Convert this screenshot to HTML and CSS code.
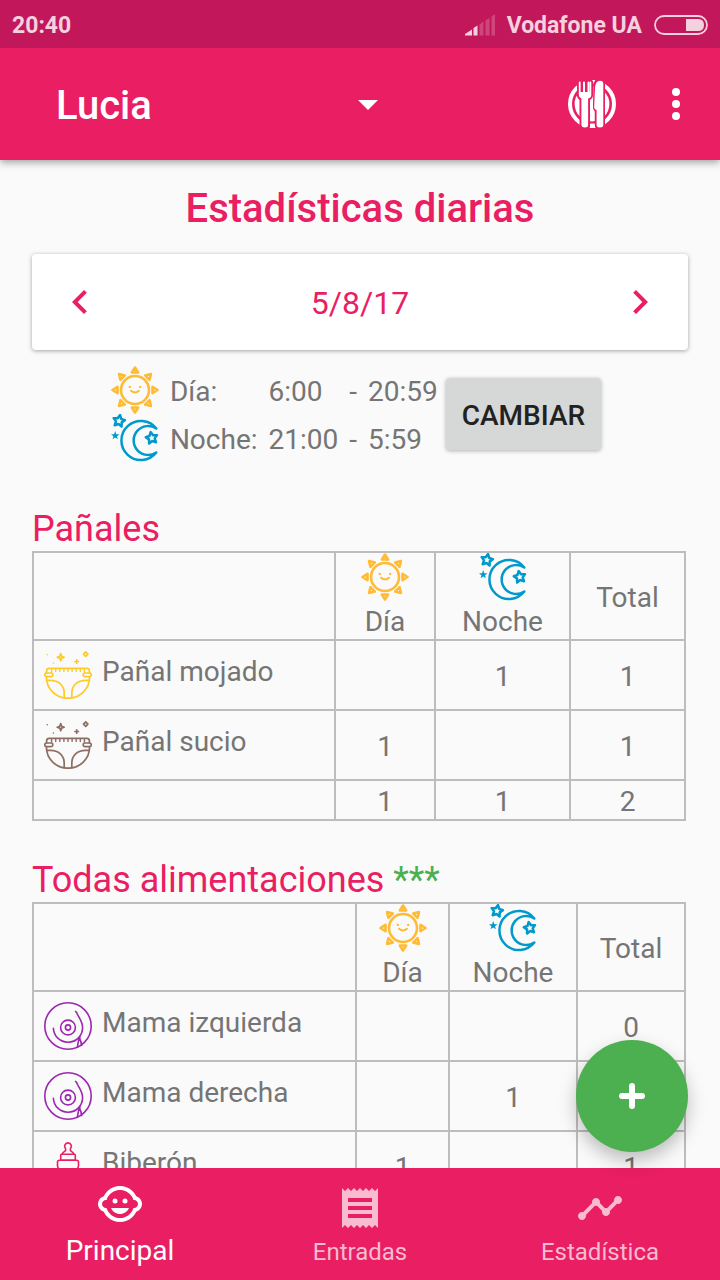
FILE: index.html
```html
<!DOCTYPE html>
<html lang="es">
<head>
  <meta charset="UTF-8" />
  <meta name="viewport" content="width=device-width, initial-scale=1.0" />
  <title>Estadísticas diarias</title>
  <link rel="stylesheet" href="styles.css">
</head>
<body>
  <!-- shared icons -->
  <svg class="sprite" aria-hidden="true">
    <symbol id="sun" viewBox="0 0 48 48">
      <g fill="none" stroke="#ffbb33" stroke-width="2.6" stroke-linejoin="round" stroke-linecap="round">
        <circle cx="24" cy="24" r="14"/>
        <path d="M24 1.5 20.9 6.5h6.2z"/>
        <path d="M24 1.5 20.9 6.5h6.2z" transform="rotate(45 24 24)"/>
        <path d="M24 1.5 20.9 6.5h6.2z" transform="rotate(90 24 24)"/>
        <path d="M24 1.5 20.9 6.5h6.2z" transform="rotate(135 24 24)"/>
        <path d="M24 1.5 20.9 6.5h6.2z" transform="rotate(180 24 24)"/>
        <path d="M24 1.5 20.9 6.5h6.2z" transform="rotate(225 24 24)"/>
        <path d="M24 1.5 20.9 6.5h6.2z" transform="rotate(270 24 24)"/>
        <path d="M24 1.5 20.9 6.5h6.2z" transform="rotate(315 24 24)"/>
        <path d="M20 24.8q4 3.4 8 0" stroke-width="2"/>
      </g>
      <circle cx="18.8" cy="20.9" r="1.2" fill="#ffbb33"/>
      <circle cx="29.2" cy="20.9" r="1.2" fill="#ffbb33"/>
    </symbol>
    <symbol id="moon" viewBox="0 0 48 48">
      <g fill="none" stroke="#0099cc" stroke-width="2.5" stroke-linejoin="round">
        <path d="M45.3 14.5A19.5 19.5 0 1 0 45.3 38.5A14.5 14.5 0 1 1 45.3 14.5z"/>
        <path transform="translate(8 7) rotate(10)" d="M0-6 1.8-2.4 5.7-1.9 2.9.9 3.5 4.9 0 3-3.5 4.9-2.9.9-5.7-1.9-1.8-2.4z"/>
        <path transform="translate(40.7 24) rotate(-10)" d="M0-6 1.8-2.4 5.7-1.9 2.9.9 3.5 4.9 0 3-3.5 4.9-2.9.9-5.7-1.9-1.8-2.4z"/>
      </g>
      <path fill="#0099cc" transform="translate(4.2 21.6) scale(.75)" d="M0-6 1.5-1.9 5.7-1.9 2.4.8 3.5 4.9 0 2.5-3.5 4.9-2.4.8-5.7-1.9-1.5-1.9z"/>
    </symbol>
    <symbol id="diaper" viewBox="0 0 48 48">
      <g fill="none" stroke="currentColor" stroke-width="1.7" stroke-linejoin="round" stroke-linecap="round">
        <path d="M2.6 21.8V20q0-2.6 2.6-2.6h37.6q2.6 0 2.6 2.6v1.8"/>
        <path d="M7.6 18v3M11.7 18v2.4M15.8 18v2.4M19.9 18v2.4M24 18v2.4M28.1 18v2.4M32.2 18v2.4M36.3 18v2.4M40.4 18v3" stroke-width="1.4"/>
        <rect x=".8" y="22" width="8" height="3.6" rx="1.6"/>
        <rect x="39.2" y="22" width="8" height="3.6" rx="1.6"/>
        <path d="M2.4 26C2.4 38 12 47.2 24 47.2S45.600 38 45.600 26"/>
        <path d="M2.8 29.4h3.6C14.5 29.4 20.2 34.5 20.2 42v4.600"/>
        <path d="M45.2 29.4h-3.6C33.5 29.4 27.8 34.5 27.8 42v4.600"/>
        <path d="M16.7 2.6 17.6 5.3 20.2 6.2 17.6 7.1 16.7 9.8 15.800 7.1 13.2 6.2 15.800 5.3z"/>
        <path d="M32.7 8.800v3.400M31 10.500h3.400"/>
        <path d="M41.700.8 43.900 3.100 41.700 5.400 39.500 3.100z"/>
      </g>
      <circle cx="3.300" cy="3.700" r=".8" fill="currentColor"/>
      <circle cx="9.400" cy="12" r=".8" fill="currentColor"/>
    </symbol>
    <symbol id="breast" viewBox="0 0 48 48">
      <g fill="none" stroke="currentColor" stroke-width="1.6" stroke-linecap="round">
        <circle cx="24" cy="24" r="23.2"/>
        <circle cx="24" cy="25.5" r="7.4"/>
        <circle cx="24" cy="25.5" r="2.6"/>
        <path d="M9.4 26.2C9.8 34.2 16 40.2 24 40.2C32.5 40.2 38.6 33.5 38.6 25.5C38.6 20 35.5 16.5 33.2 12Q33 10 31.6 9.4"/>
        <path d="M35.8 34.5Q34.5 37.5 33.4 45.2M35.8 34.5V37Q37.4 40 37.6 43.5"/>
      </g>
    </symbol>
    <symbol id="bottle" viewBox="0 0 48 48">
      <g fill="none" stroke="currentColor" stroke-width="1.6" stroke-linejoin="round">
        <path d="M18 12.2Q18.6 10.6 20.6 9.4 22 8.4 21.6 6.6C19.6 4.4 20.8.9 24 .9s4.400 3.500 2.400 5.700q-.4 1.800 1 2.800 2 1.200 2.600 2.800"/>
        <rect x="16.7" y="12.3" width="14.6" height="6" rx="1"/>
        <path d="M13.5 24v-3.700q0-2 2-2h17q2 0 2 2V24l-1 3v18q0 2-2 2h-15q-2 0-2-2V27z"/>
      </g>
    </symbol>
  </svg>

  <div class="status-bar">
    <span class="clock">20:40</span>
    <svg class="signal" width="30" height="22" viewBox="0 0 30 22" fill="currentColor" aria-hidden="true">
      <path d="M0 21.5V20L7 15.5v6zM8.5 14l4-2.500v10h-4z"/>
      <path opacity=".25" d="M14.5 10.5l4-3v14h-4zM20.5 6.500l4-2.500v17.500h-4zM26.500 2.500L30 0v21.500h-3.500z"/>
    </svg>
    <span class="carrier">Vodafone UA</span>
    <svg class="battery" width="54" height="20" viewBox="0 0 54 20" aria-hidden="true">
      <rect x="1" y="1" width="52" height="18" rx="9" fill="none" stroke="currentColor" stroke-width="1.8"/>
      <path fill="currentColor" d="M32 4h12q6 0 6 6t-6 6H32z"/>
    </svg>
  </div>

  <header class="app-bar">
    <div class="child-picker">
      <select id="child" name="child" aria-label="Bebé">
        <option>Lucia</option>
      </select>
      <svg class="caret" width="48" height="48" viewBox="0 0 24 24" aria-hidden="true"><path fill="currentColor" d="M7 10l5 5 5-5z"/></svg>
    </div>
    <button type="button" class="icon-btn" aria-label="Comidas">
      <svg width="48" height="48" viewBox="0 0 48 48" aria-hidden="true">
        <mask id="plateMask">
          <rect width="48" height="48" fill="#fff"/>
          <path fill="#000" d="M9 0h16v16q0 2-3 4v28H11.500V20q-2.500-2-2.500-4zM25.500 0H37v48H26.500V31q-2-2-1.500-6z"/>
        </mask>
        <g mask="url(#plateMask)">
          <circle cx="24" cy="24" r="22" fill="none" stroke="#fff" stroke-width="4"/>
          <circle cx="24" cy="24" r="17.4" fill="#fff"/>
        </g>
        <path fill="#fff" d="M10.8 2.500q0-1 .9-1t.9 1V12h2.400V2.500q0-1 1-1t1 1V12h2.500V2.500q0-1 1-1t1 1V12h.2V2.500q0-1 .8-1t.8 1V15q0 2.500-3.200 3.500V45q0 2.500-3.200 2.500T13.400 45V18.500q-2.600-1-2.600-3.500z"/>
        <path fill="#fff" d="M35.300 4v41q0 2.500-3.300 2.500T28.600 45V30q-2.600-.5-2.400-3.500L27 8Q27.500.8 32 .8q3.300 0 3.300 3.200z"/>
        <path fill="#fff" d="M22.500 20.500h1.700l-.2 7q0 2.500 2.500 4V41h-4zM22.500 43.500h4V45l1 3h-6l1-2zM24.200 0h3l-1.500 3z"/>
      </svg>
    </button>
    <button type="button" class="icon-btn" aria-label="Más opciones">
      <svg width="48" height="48" viewBox="0 0 24 24" fill="currentColor" aria-hidden="true">
        <circle cx="12" cy="6" r="2"/><circle cx="12" cy="12" r="2"/><circle cx="12" cy="18" r="2"/>
      </svg>
    </button>
  </header>

  <main class="content">
    <h1>Estadísticas diarias</h1>

    <div class="date-card">
      <button type="button" class="icon-btn" aria-label="Día anterior">
        <svg width="48" height="48" viewBox="0 0 24 24" aria-hidden="true"><path fill="currentColor" d="M15.410 7.410L14 6l-6 6 6 6 1.410-1.410L10.830 12z"/></svg>
      </button>
      <span class="date">5/8/17</span>
      <button type="button" class="icon-btn" aria-label="Día siguiente">
        <svg width="48" height="48" viewBox="0 0 24 24" aria-hidden="true"><path fill="currentColor" d="M10 6L8.590 7.410 13.170 12l-4.580 4.590L10 18l6-6z"/></svg>
      </button>
    </div>

    <div class="schedule">
      <div class="hours">
        <svg class="icon"><use href="#sun"/></svg>
        <span>Día:</span><span>6:00</span><span>-</span><span>20:59</span>
        <svg class="icon"><use href="#moon"/></svg>
        <span>Noche:</span><span>21:00</span><span>-</span><span>5:59</span>
      </div>
      <button type="button" class="change-btn">CAMBIAR</button>
    </div>

    <section>
      <h2>Pañales</h2>
      <table class="stats diapers">
        <colgroup><col><col class="day"><col class="night"><col class="total"></colgroup>
        <thead>
          <tr>
            <td></td>
            <th scope="col"><svg class="icon"><use href="#sun"/></svg>Día</th>
            <th scope="col"><svg class="icon"><use href="#moon"/></svg>Noche</th>
            <th scope="col">Total</th>
          </tr>
        </thead>
        <tbody>
          <tr>
            <th scope="row"><div class="row-label wet"><svg class="icon"><use href="#diaper"/></svg>Pañal mojado</div></th>
            <td></td><td>1</td><td>1</td>
          </tr>
          <tr>
            <th scope="row"><div class="row-label dirty"><svg class="icon"><use href="#diaper"/></svg>Pañal sucio</div></th>
            <td>1</td><td></td><td>1</td>
          </tr>
        </tbody>
        <tfoot>
          <tr><td></td><td>1</td><td>1</td><td>2</td></tr>
        </tfoot>
      </table>
    </section>

    <section>
      <h2>Todas alimentaciones <span class="note">***</span></h2>
      <table class="stats feedings">
        <colgroup><col><col class="day"><col class="night"><col class="total"></colgroup>
        <thead>
          <tr>
            <td></td>
            <th scope="col"><svg class="icon"><use href="#sun"/></svg>Día</th>
            <th scope="col"><svg class="icon"><use href="#moon"/></svg>Noche</th>
            <th scope="col">Total</th>
          </tr>
        </thead>
        <tbody>
          <tr>
            <th scope="row"><div class="row-label nursing"><svg class="icon"><use href="#breast"/></svg>Mama izquierda</div></th>
            <td></td><td></td><td>0</td>
          </tr>
          <tr>
            <th scope="row"><div class="row-label nursing"><svg class="icon"><use href="#breast"/></svg>Mama derecha</div></th>
            <td></td><td>1</td><td>1</td>
          </tr>
          <tr>
            <th scope="row"><div class="row-label bottle"><svg class="icon"><use href="#bottle"/></svg>Biberón</div></th>
            <td>1</td><td></td><td>1</td>
          </tr>
        </tbody>
      </table>
    </section>
  </main>

  <button type="button" class="fab" aria-label="Añadir">
    <svg width="28" height="28" viewBox="0 0 28 28" aria-hidden="true"><path fill="none" stroke="#fff" stroke-width="6" stroke-linecap="round" d="M14 4v20M4 14h20"/></svg>
  </button>

  <nav class="bottom-nav">
    <a href="#principal" class="active" aria-current="page">
      <svg width="48" height="48" viewBox="0 0 24 24" fill="currentColor" aria-hidden="true">
        <circle cx="14.500" cy="10.500" r="1.250"/><circle cx="9.500" cy="10.500" r="1.250"/>
        <path d="M22.940 12.660c.04-.21.06-.43.06-.66s-.02-.45-.06-.66c-.25-1.510-1.360-2.740-2.810-3.170-.53-1.120-1.280-2.100-2.190-2.910C16.360 3.850 14.280 3 12 3s-4.360.85-5.940 2.260c-.92.81-1.670 1.800-2.190 2.910-1.450.43-2.560 1.650-2.810 3.170-.04.21-.06.43-.06.66s.02.45.06.66c.25 1.510 1.360 2.740 2.810 3.170.52 1.110 1.270 2.090 2.170 2.890C7.620 20.140 9.710 21 12 21s4.380-.86 5.970-2.280c.9-.8 1.650-1.790 2.170-2.890 1.440-.43 2.550-1.650 2.800-3.170zM19 14c-.1 0-.19-.02-.29-.03-.2.67-.49 1.290-.86 1.860C16.600 17.740 14.450 19 12 19s-4.600-1.260-5.850-3.170c-.37-.57-.66-1.190-.86-1.860-.1.010-.19.030-.29.030-1.100 0-2-.9-2-2s.9-2 2-2c.1 0 .19.020.29.030.2-.67.49-1.290.86-1.860C7.400 6.260 9.550 5 12 5s4.600 1.260 5.850 3.170c.37.57.66 1.190.86 1.860.1-.01.19-.03.29-.03 1.100 0 2 .9 2 2s-.9 2-2 2zM7.500 14c.76 1.770 2.490 3 4.500 3s3.740-1.230 4.500-3h-9z"/>
      </svg>
      <span>Principal</span>
    </a>
    <a href="#entradas">
      <svg width="48" height="48" viewBox="0 0 24 24" fill="currentColor" aria-hidden="true"><path d="M18 17H6v-2h12v2zm0-4H6v-2h12v2zm0-4H6V7h12v2zM3 22l1.500-1.500L6 22l1.500-1.500L9 22l1.500-1.500L12 22l1.500-1.500L15 22l1.500-1.500L18 22l1.500-1.500L21 22V2l-1.500 1.500L18 2l-1.500 1.500L15 2l-1.500 1.500L12 2l-1.500 1.500L9 2 7.500 3.500 6 2 4.500 3.500 3 2v20z"/></svg>
      <span>Entradas</span>
    </a>
    <a href="#estadistica">
      <svg width="48" height="48" viewBox="0 0 24 24" fill="currentColor" aria-hidden="true"><path d="M23 8c0 1.100-.9 2-2 2-.18 0-.35-.02-.51-.07l-3.560 3.550c.05.16.07.34.07.52 0 1.100-.9 2-2 2s-2-.9-2-2c0-.18.02-.36.07-.52l-2.550-2.550c-.16.05-.34.07-.52.07s-.36-.02-.52-.07l-4.550 4.560c.05.16.07.33.07.51 0 1.100-.9 2-2 2s-2-.9-2-2 .9-2 2-2c.18 0 .35.02.51.07l4.560-4.550C8.020 9.360 8 9.180 8 9c0-1.100.9-2 2-2s2 .9 2 2c0 .18-.02.36-.07.52l2.550 2.550c.16-.05.34-.07.52-.07s.36.02.52.07l3.550-3.560C19.020 8.350 19 8.180 19 8c0-1.100.9-2 2-2s2 .9 2 2z"/></svg>
      <span>Estadística</span>
    </a>
  </nav>
</body>
</html>
```

FILE: styles.css
```css
*{box-sizing:border-box}
body{margin:0;height:100vh;display:flex;flex-direction:column;font-family:Roboto,"Noto Sans",sans-serif;font-size:28px;color:#757575;background:#fafafa}
button{font-family:inherit;border:none;cursor:pointer}
svg{display:block}
.sprite{position:absolute;width:0;height:0}
.icon{width:48px;height:48px;flex:none}
.icon-btn{padding:0;background:none;color:inherit}

/* status bar */
.status-bar{flex:none;display:flex;align-items:center;height:48px;padding:2px 12px 0;background:#c2185b;color:#f5d0de;font-size:23px;font-weight:bold;z-index:2}
.signal{margin-left:auto}
.carrier{margin:0 12px}

/* app bar */
.app-bar{flex:none;display:flex;align-items:center;gap:36px;height:112px;padding:0 20px 0 56px;background:#e91e63;color:#fff;box-shadow:0 2px 8px rgba(0,0,0,.4);z-index:1}
.child-picker{position:relative;flex:0 1 336px;margin-right:auto}
.child-picker select{appearance:none;width:100%;padding:4px 48px 0 0;border:none;background:none;color:inherit;font-family:inherit;font-size:40px;font-weight:500;line-height:50px}
.child-picker option{color:#212121}
.caret{position:absolute;top:0;right:0;bottom:0;margin:auto;pointer-events:none}

/* content */
.content{flex:1;min-height:0;padding:24px 32px 0;overflow-y:auto;scrollbar-width:none}
h1{margin:0 0 20px;font-size:40px;font-weight:500;line-height:50px;text-align:center;color:#e91e63}
h2{margin:0;font-size:36px;font-weight:normal;line-height:43px;color:#e91e63}
.note{color:#4caf50}
section + section{margin-top:38px}

.date-card{display:flex;align-items:center;justify-content:space-between;height:96px;padding:0 24px;border-radius:4px;background:#fff;color:#e91e63;box-shadow:0 1px 4px rgba(0,0,0,.35)}
.date{font-size:32px;padding-top:2px}

.schedule{display:flex;justify-content:center;align-items:center;margin:16px 0 46px}
.hours{display:grid;grid-template-columns:repeat(5,auto);grid-auto-rows:48px;align-items:center;column-gap:11px}
.hours span{padding-top:2px}
.change-btn{height:72px;margin:0 8px;padding:2px 16px 0;border-radius:4px;background:#d6d7d7;color:#212121;font-size:28px;font-weight:500;box-shadow:0 1px 4px rgba(0,0,0,.3)}

/* tables */
.stats{width:calc(100% - 2px);table-layout:fixed;border-collapse:collapse;line-height:34px;text-align:center}
.stats th,.stats td{padding:0;border:2px solid #bdbdbd;font-weight:normal}
.stats td,.stats th:last-child{padding-top:4px}
.stats thead .icon{margin:0 auto 4px}
.stats thead tr{height:88px}
.stats tbody tr{height:70px}
.stats tfoot tr{height:40px}
.diapers .day{width:100px}
.diapers .night{width:135px}
.diapers .total{width:115px}
.feedings .day{width:93px}
.feedings .night{width:128px}
.feedings .total{width:108px}
.row-label{display:flex;gap:10px;padding-left:10px;line-height:42px;text-align:left}
.wet .icon{color:#ffca28}
.dirty .icon{color:#8d6e63}
.nursing .icon{color:#9c27b0}
.bottle .icon{color:#e91e63}

/* floating button */
.fab{position:fixed;right:32px;bottom:128px;width:112px;height:112px;padding:0;border-radius:50%;background:#4caf50;display:flex;align-items:center;justify-content:center;box-shadow:0 8px 18px rgba(0,0,0,.25)}

/* bottom navigation */
.bottom-nav{flex:none;display:grid;grid-template-columns:repeat(3,1fr);height:112px;background:#e91e63}
.bottom-nav a{display:flex;flex-direction:column;align-items:center;padding-top:16px;color:#f8bbd0;font-size:24px;line-height:40px;text-decoration:none}
.bottom-nav .active{padding-top:12px;color:#fff;font-size:28px;line-height:46px}
```
